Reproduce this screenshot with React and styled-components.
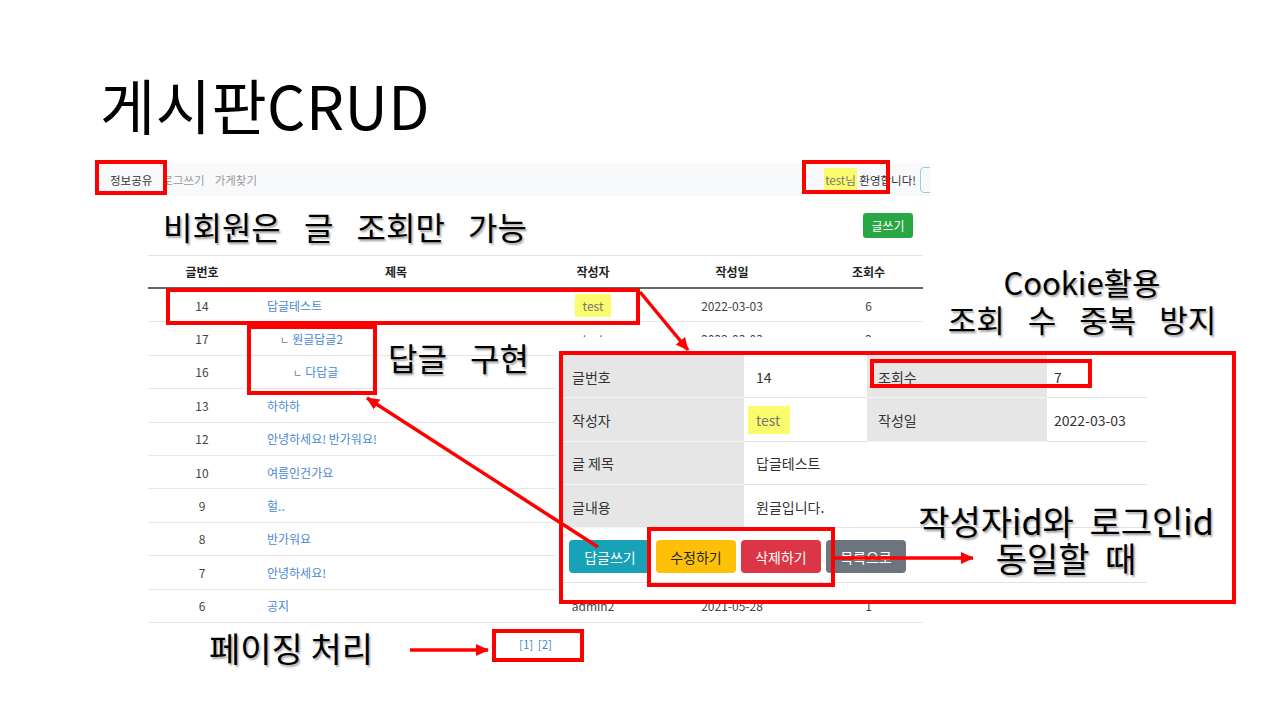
import React from 'react';
import styled, { createGlobalStyle, css } from 'styled-components';

const GlobalStyle = createGlobalStyle`
  html, body { margin: 0; padding: 0; background: #fff; }
  * { box-sizing: border-box; }
`;

const kr = `"Noto Sans CJK KR", "Noto Sans", sans-serif`;

const Slide = styled.div`
  position: relative;
  width: 1280px;
  height: 720px;
  padding-top: 69px;
  background: #fff;
  overflow: hidden;
  font-family: ${kr};
`;

const Title = styled.h1`
  margin: 0 0 0 100px;
  height: 70px;
  font-size: 60px;
  line-height: 70px;
  font-weight: 400;
  letter-spacing: 0.5px;
  color: #000;
`;

const Nav = styled.nav`
  display: flex;
  align-items: center;
  width: 832px;
  height: 33px;
  margin: 24px 0 0 98px;
  padding-left: 12px;
  background: #f8f9fa;
  overflow: hidden;
  font-size: 11.5px;
`;

const NavLinks = styled.div`
  display: flex;
  gap: 10px;
`;

const NavLink = styled.span`
  color: ${p => (p.$active ? '#333' : '#9a9a9a')};
`;

const NavRight = styled.div`
  display: flex;
  align-items: center;
  flex-shrink: 0;
  margin-left: auto;
  margin-right: -22px;
  color: #333;
`;

const Highlight = styled.span`
  background: #fbfb6e;
  color: #777;
  ${p => p.$pad && css`padding: ${p.$pad};`}
  ${p => p.$shift && css`margin-left: ${p.$shift}px;`}
`;

const OutlineButton = styled.span`
  width: 32px;
  height: 26px;
  margin-left: 4px;
  border: 1px solid #8fcfd8;
  border-radius: 4px;
`;

const Board = styled.div`
  width: 775px;
  margin-left: 148px;
`;

const HeadingRow = styled.div`
  display: flex;
  align-items: center;
  justify-content: space-between;
  height: 59px;
  padding: 0 10px 0 15px;
`;

const Heading = styled.h2`
  margin: 0;
  font-size: 32px;
  font-weight: 400;
  word-spacing: 16px;
  color: #000;
  text-shadow: 1.5px 1.5px 2px rgba(0, 0, 0, 0.35);
`;

const WriteButton = styled.span`
  display: flex;
  align-items: center;
  justify-content: center;
  width: 50px;
  height: 25px;
  border-radius: 3px;
  background: #28a745;
  color: #fff;
  font-size: 12px;
`;

const cols = '108px 280px 114px 164px 109px';

const HeadRow = styled.div`
  display: grid;
  grid-template-columns: ${cols};
  align-items: center;
  height: 34px;
  border-top: 1px solid #e3e3e3;
  border-bottom: 2px solid #666;
  font-size: 12px;
  font-weight: 700;
  color: #222;
  text-align: center;
`;

const Row = styled.div`
  display: grid;
  grid-template-columns: ${cols};
  align-items: center;
  height: 33.4px;
  border-bottom: 1px solid #e6e6e6;
  font-size: 12px;
  color: #444;
  text-align: center;
`;

const TitleCell = styled.div`
  text-align: left;
  padding-left: ${p => 11 + p.$depth * 13}px;
  color: #4a89d4;
`;

const ReplyMark = styled.span`
  margin-right: 3px;
  font-size: 10px;
  color: #777;
`;

const Paging = styled.div`
  margin-top: 13px;
  text-align: center;
  font-size: 11.5px;
  color: #4a89d4;
  word-spacing: 2px;
`;

const Sheet = styled.div`
  position: absolute;
  left: 556px;
  top: 337px;
  width: 684px;
  height: 266px;
  padding: 18px 0 0 7px;
  background: #fff;
`;

const DetailGrid = styled.div`
  display: grid;
  grid-template-columns: 181px 123px 180px 100px;
  grid-auto-rows: 43.3px;
  width: 584px;
  font-size: 14px;
`;

const Label = styled.div`
  display: flex;
  align-items: center;
  padding-left: ${p => p.$pad || 9}px;
  background: #e6e6e6;
  color: #333;
  box-shadow: inset 0 -1px 0 #f4f4f4;
`;

const Value = styled.div`
  display: flex;
  align-items: center;
  padding-left: ${p => p.$pad || 12}px;
  color: #333;
  box-shadow: inset 0 -1px 0 #dee2e6;
  ${p => p.$wide && css`grid-column: span 3;`}
`;

const ButtonRow = styled.div`
  display: flex;
  gap: 5px;
  width: 584px;
  height: 55px;
  padding: 12px 0 0 6px;
  border-bottom: 1px solid #dee2e6;
`;

const tones = {
  info: ['#17a2b8', '#fff'],
  warning: ['#ffc107', '#212529'],
  danger: ['#dc3545', '#fff'],
  secondary: ['#6c757d', '#fff'],
};

const Button = styled.span`
  display: flex;
  align-items: center;
  justify-content: center;
  width: ${p => p.$w || 80}px;
  height: 33px;
  border-radius: 4px;
  background: ${p => tones[p.$tone][0]};
  color: ${p => tones[p.$tone][1]};
  font-size: 14px;
`;

const Callout = styled.div`
  position: absolute;
  left: ${p => p.$x}px;
  top: ${p => p.$y}px;
  width: ${p => p.$w}px;
  height: ${p => p.$h}px;
  border: 4px solid #ff0000;
`;

const Note = styled.div`
  position: absolute;
  left: ${p => p.$x}px;
  top: ${p => p.$y}px;
  ${p => p.$w && css`width: ${p.$w}px; text-align: center;`}
  font-size: ${p => p.$size || 32}px;
  line-height: ${p => p.$lh || 40}px;
  word-spacing: ${p => p.$ws || 0}px;
  color: #000;
  white-space: pre;
  text-shadow: 1.5px 1.5px 2px rgba(0, 0, 0, 0.35);
`;

const Arrows = styled.svg`
  position: absolute;
  left: 0;
  top: 0;
  pointer-events: none;
`;

// rows 16..7 sit under the detail sheet, so their right-hand cells are left out
const rows = [
  { no: 14, title: '답글테스트', depth: 0, writer: 'test', date: '2022-03-03', hit: 6, mark: true },
  { no: 17, title: '원글답글2', depth: 1, writer: 'test', date: '2022-03-03', hit: 2 },
  { no: 16, title: '다답글', depth: 2 },
  { no: 13, title: '하하하', depth: 0 },
  { no: 12, title: '안녕하세요! 반가워요!', depth: 0 },
  { no: 10, title: '여름인건가요', depth: 0 },
  { no: 9, title: '헐..', depth: 0 },
  { no: 8, title: '반가워요', depth: 0 },
  { no: 7, title: '안녕하세요!', depth: 0 },
  { no: 6, title: '공지', depth: 0, writer: 'admin2', date: '2021-05-28', hit: 1 },
];

const arrows = [
  [640, 292, 688, 350],
  [598, 547, 367, 398],
  [834, 558, 973, 558],
  [410, 650, 488, 650],
];

export default function App() {
  return (
    <>
      <GlobalStyle />
      <Slide>
        <Title>게시판CRUD</Title>

        <Nav>
          <NavLinks>
            <NavLink $active>정보공유</NavLink>
            <NavLink>로그쓰기</NavLink>
            <NavLink>가게찾기</NavLink>
          </NavLinks>
          <NavRight>
            <Highlight $pad="4px 1px">test님</Highlight>&nbsp;환영합니다!
            <OutlineButton />
          </NavRight>
        </Nav>

        <Board>
          <HeadingRow>
            <Heading>비회원은 글 조회만 가능</Heading>
            <WriteButton>글쓰기</WriteButton>
          </HeadingRow>
          <HeadRow>
            <div>글번호</div>
            <div>제목</div>
            <div>작성자</div>
            <div>작성일</div>
            <div>조회수</div>
          </HeadRow>
          {rows.map(r => (
            <Row key={r.no}>
              <div>{r.no}</div>
              <TitleCell $depth={r.depth}>
                {r.depth > 0 && <ReplyMark>ㄴ</ReplyMark>}
                {r.title}
              </TitleCell>
              <div>{r.mark ? <Highlight $pad="3px 8px">{r.writer}</Highlight> : r.writer}</div>
              <div>{r.date}</div>
              <div>{r.hit}</div>
            </Row>
          ))}
          <Paging>[1] [2]</Paging>
        </Board>

        <Sheet>
          <DetailGrid>
            <Label>글번호</Label>
            <Value>14</Value>
            <Label $pad={11}>조회수</Label>
            <Value $pad={7}>7</Value>
            <Label>작성자</Label>
            <Value>
              <Highlight $pad="4px 10px 4px 8px" $shift={-8}>test</Highlight>
            </Value>
            <Label $pad={11}>작성일</Label>
            <Value $pad={7}>2022-03-03</Value>
            <Label>글 제목</Label>
            <Value $wide>답글테스트</Value>
            <Label>글내용</Label>
            <Value $wide>원글입니다.</Value>
          </DetailGrid>
          <ButtonRow>
            <Button $tone="info" $w={82}>답글쓰기</Button>
            <Button $tone="warning">수정하기</Button>
            <Button $tone="danger">삭제하기</Button>
            <Button $tone="secondary">목록으로</Button>
          </ButtonRow>
        </Sheet>

        <Callout $x={95} $y={160} $w={72} $h={35} />
        <Callout $x={802} $y={160} $w={88} $h={34} />
        <Callout $x={166} $y={288} $w={474} $h={37} />
        <Callout $x={247} $y={325} $w={130} $h={70} />
        <Callout $x={559} $y={351} $w={677} $h={253} />
        <Callout $x={870} $y={359} $w={222} $h={29} />
        <Callout $x={647} $y={527} $w={188} $h={60} />
        <Callout $x={492} $y={629} $w={92} $h={33} />

        <Note $x={388} $y={337} $ws={16}>답글 구현</Note>
        <Note $x={932} $y={263} $w={300} $size={31} $lh={37} $ws={16}>{'Cookie활용\n조회 수 중복 방지'}</Note>
        <Note $x={916} $y={502} $w={300} $size={34} $lh={37} $ws={8}>{'작성자id와 로그인id\n동일할 때'}</Note>
        <Note $x={209} $y={628} $size={34}>페이징 처리</Note>

        <Arrows width="1280" height="720" viewBox="0 0 1280 720">
          <defs>
            <marker id="head" markerUnits="userSpaceOnUse" markerWidth="14" markerHeight="14" refX="12" refY="7" orient="auto">
              <path d="M0 1 L13 7 L0 13 Z" fill="#ff0000" />
            </marker>
          </defs>
          {arrows.map(([x1, y1, x2, y2], i) => (
            <line key={i} x1={x1} y1={y1} x2={x2} y2={y2} stroke="#ff0000" strokeWidth="3.5" markerEnd="url(#head)" />
          ))}
        </Arrows>
      </Slide>
    </>
  );
}
